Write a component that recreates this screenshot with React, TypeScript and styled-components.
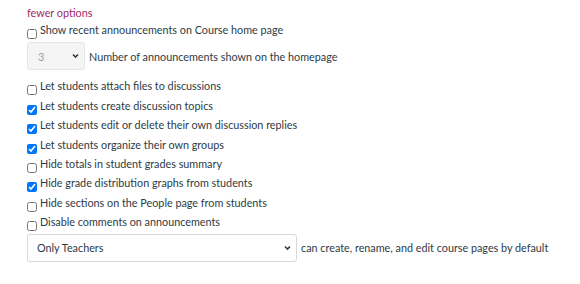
import React from "react";
import styled, { createGlobalStyle } from "styled-components";

const Global = createGlobalStyle`
  html, body { margin: 0; padding: 0; background: #fff; }
  body { font-family: Lato, "Open Sans", "Liberation Sans", sans-serif; color: #2d3b45; }
`;

const Page = styled.div`
  width: 580px;
  height: 284px;
  box-sizing: border-box;
  padding: 5px 0 0 27px;
  font-size: 10.8px;
  display: flex;
  flex-direction: column;
`;

const Toggle = styled.a`
  color: #a0276c;
  text-decoration: none;
  font-size: 10.8px;
  line-height: 16px;
  height: 17px;
`;

const Row = styled.label<{ $mt?: number }>`
  display: flex;
  align-items: flex-start;
  height: 19.4px;
  line-height: 16px;
  margin-top: ${(p) => p.$mt ?? 0}px;
  white-space: nowrap;
`;

const Box = styled.input.attrs({ type: "checkbox" })`
  width: 10px;
  height: 10px;
  margin: 7px 3px 0 0;
  flex: none;
`;

const SelectRow = styled.div<{ $mt?: number }>`
  display: flex;
  align-items: center;
  gap: 4px;
  margin-top: ${(p) => p.$mt ?? 0}px;
  white-space: nowrap;
`;

const SelectWrap = styled.div<{ $w: number }>`
  position: relative;
  width: ${(p) => p.$w}px;
  height: 28px;
  flex: none;
`;

const NativeSelect = styled.select<{ $disabled?: boolean }>`
  appearance: none;
  -webkit-appearance: none;
  width: 100%;
  height: 100%;
  box-sizing: border-box;
  margin: 0;
  padding: 0 0 0 ${(p) => (p.$disabled ? 10 : 9)}px;
  border: 1px solid ${(p) => (p.$disabled ? "#e3e6e8" : "#d7dadc")};
  border-radius: 3px;
  background: ${(p) => (p.$disabled ? "#f5f5f5" : "#fff")};
  color: ${(p) => (p.$disabled ? "#9aa0a4" : "#2d3b45")};
  font-family: Lato, "Open Sans", "Liberation Sans", sans-serif;
  font-size: 10.8px;
  opacity: 1;
`;

const Chevron = styled.svg`
  position: absolute;
  right: 6px;
  top: 50%;
  margin-top: -3px;
  width: 7px;
  height: 6px;
  pointer-events: none;
`;

const Caption = styled.span`
  font-size: 10.8px;
`;

function Select({ w, value, disabled }: { w: number; value: string; disabled?: boolean }) {
  return (
    <SelectWrap $w={w}>
      <NativeSelect $disabled={disabled} defaultValue={value} tabIndex={disabled ? -1 : 0}>
        <option>{value}</option>
      </NativeSelect>
      <Chevron viewBox="0 0 7 6">
        <path d="M1 1.5 L3.5 4 L6 1.5" fill="none" stroke="#2d3b45" strokeWidth="1.6" />
      </Chevron>
    </SelectWrap>
  );
}

const options: [string, boolean][] = [
  ["Let students attach files to discussions", false],
  ["Let students create discussion topics", true],
  ["Let students edit or delete their own discussion replies", true],
  ["Let students organize their own groups", true],
  ["Hide totals in student grades summary", false],
  ["Hide grade distribution graphs from students", true],
  ["Hide sections on the People page from students", false],
  ["Disable comments on announcements", false],
];

export default function App() {
  return (
    <Page>
      <Global />
      <Toggle href="#">fewer options</Toggle>
      <Row>
        <Box readOnly />
        Show recent announcements on Course home page
      </Row>
      <SelectRow $mt={1}>
        <Select w={58} value="3" disabled />
        <Caption>Number of announcements shown on the homepage</Caption>
      </SelectRow>
      {options.map(([t, c], i) => (
        <Row key={t} $mt={i === 0 ? 8 : 0}>
          <Box defaultChecked={c} />
          {t}
        </Row>
      ))}
      <SelectRow $mt={0}>
        <Select w={270} value="Only Teachers" />
        <Caption>can create, rename, and edit course pages by default</Caption>
      </SelectRow>
    </Page>
  );
}
